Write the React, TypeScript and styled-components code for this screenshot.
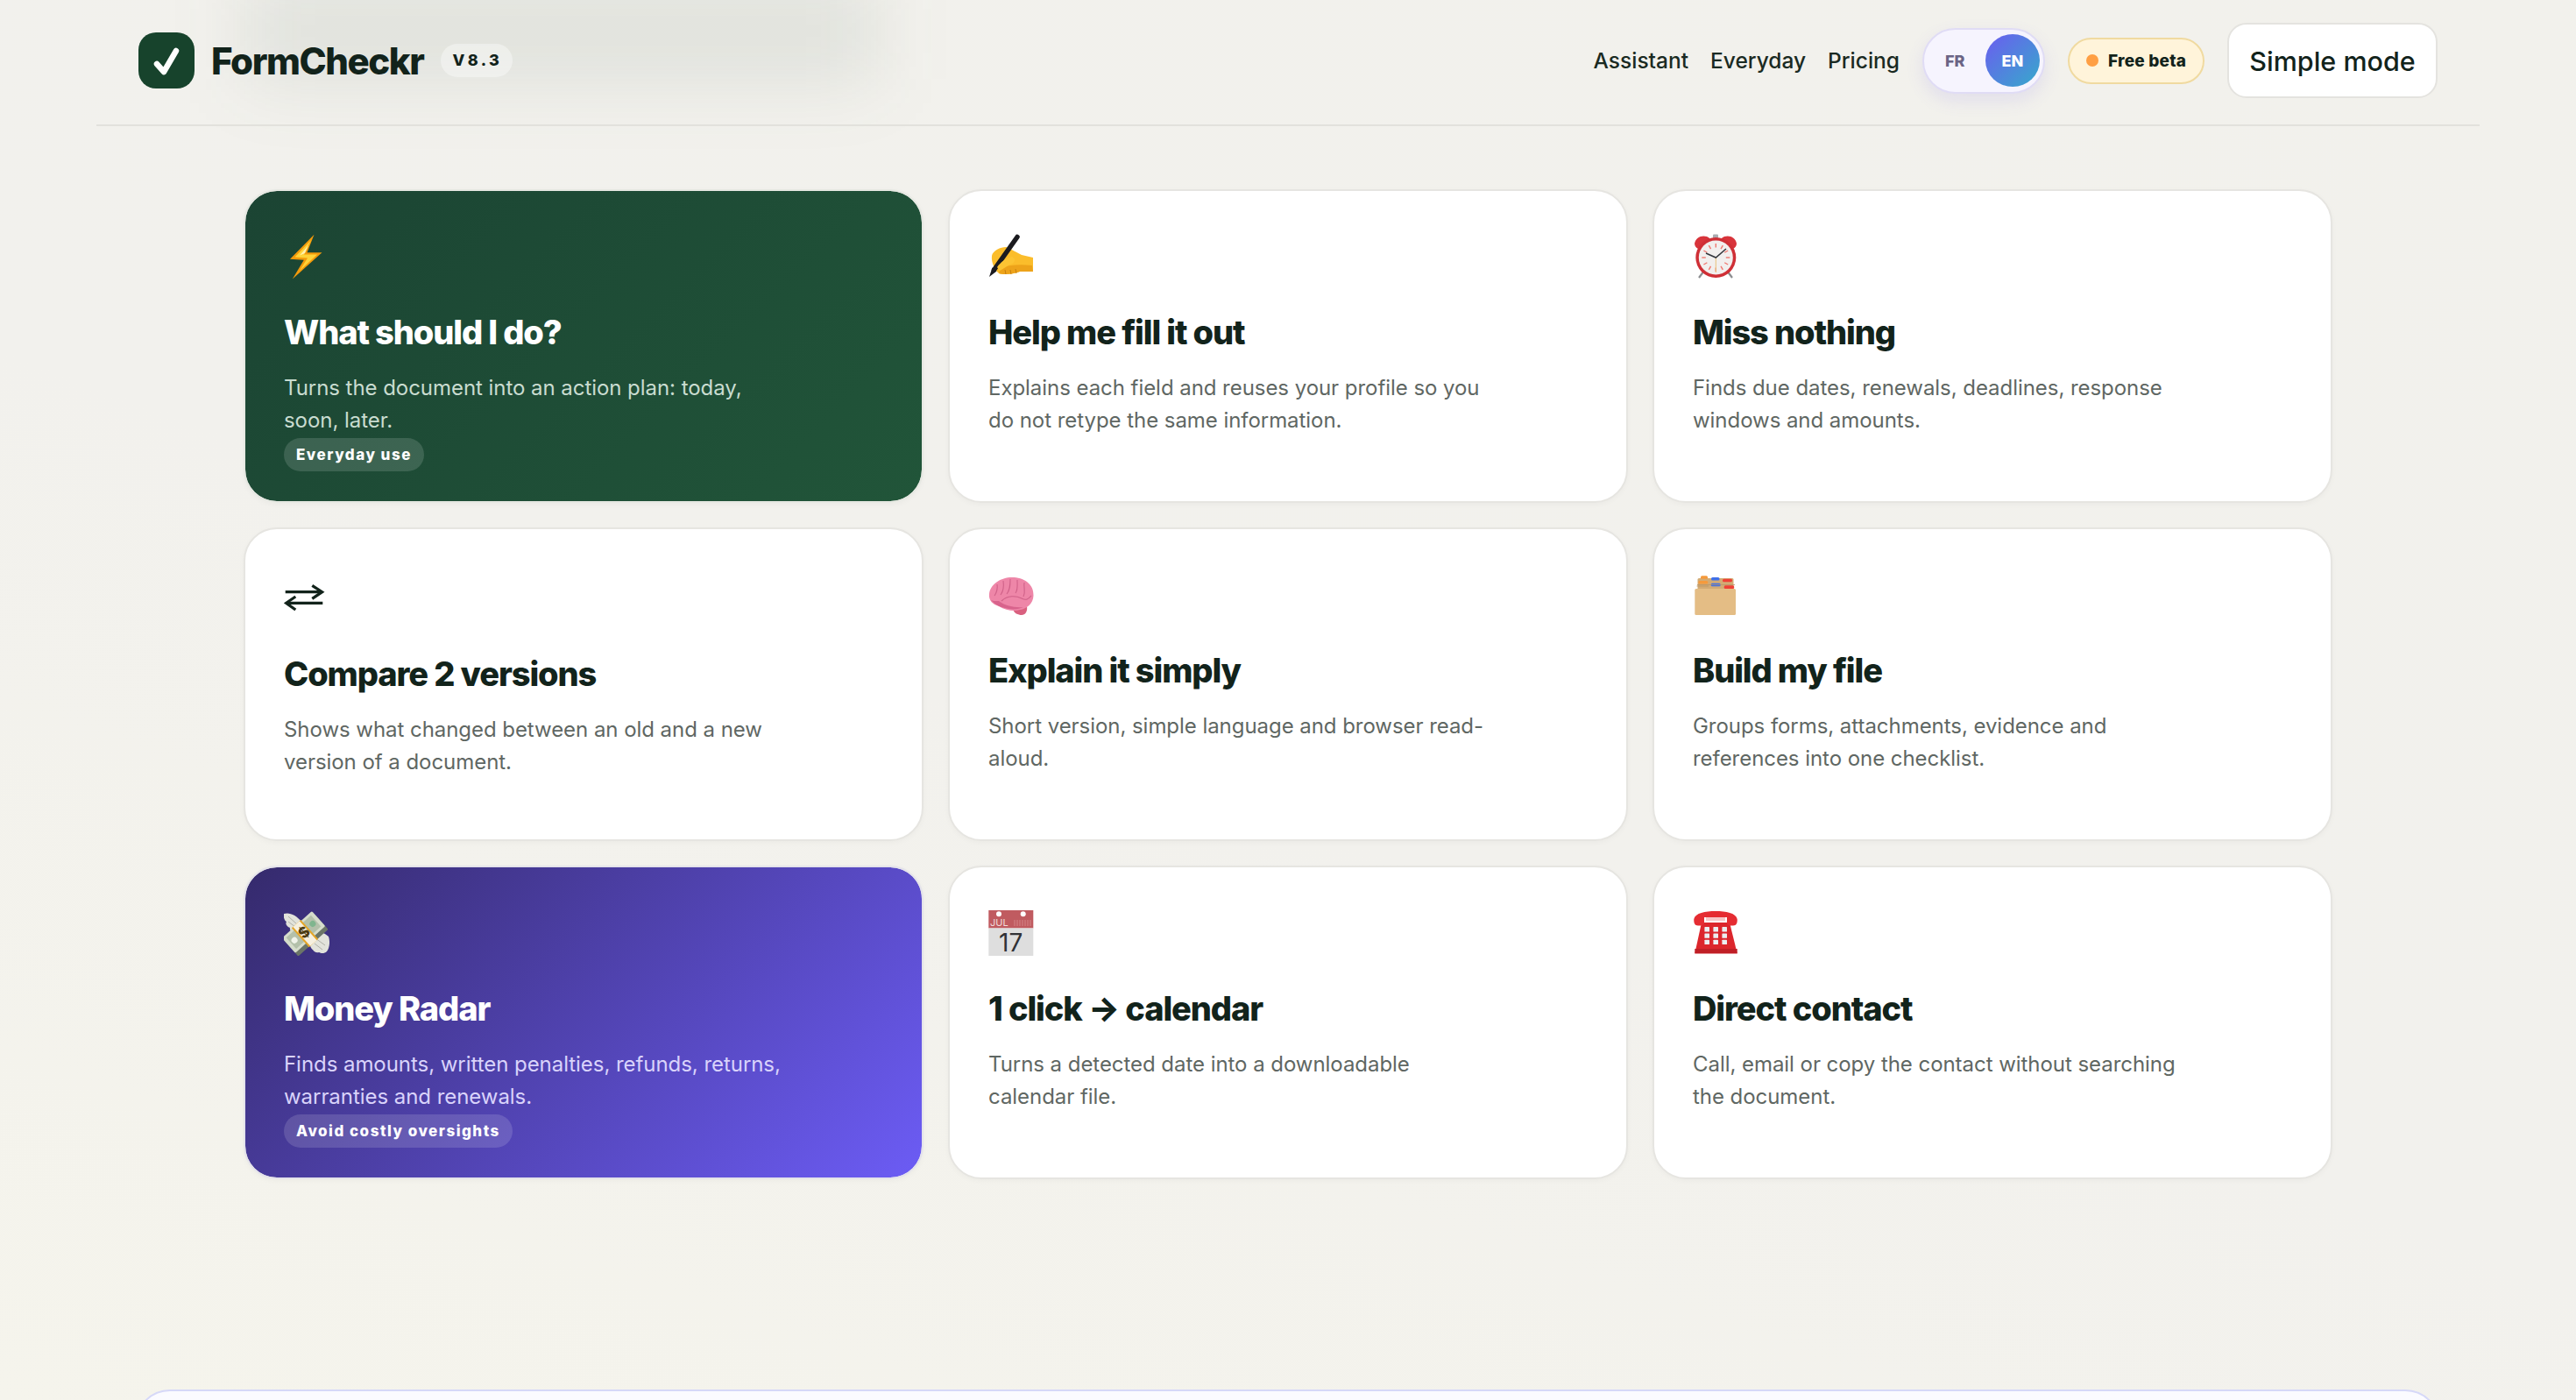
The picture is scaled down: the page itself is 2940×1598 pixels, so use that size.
import React from 'react'
import styled, { createGlobalStyle } from 'styled-components'

const Global = createGlobalStyle`
  html, body {
    margin: 0;
    height: 100%;
    overflow: hidden;
    background: linear-gradient(200deg, #f2f1ec 0%, #f2f1ed 55%, #f5f4ec 100%);
  }
  body {
    font-family: Inter, "Liberation Sans", sans-serif;
    color: #12231b;
  }
`

const Page = styled.div`
  position: relative;
  height: 1598px;
  overflow: hidden;
`
const Smudge = styled.div`
  position: absolute;
  left: 280px;
  top: -20px;
  width: 720px;
  height: 110px;
  background: rgba(60, 85, 70, 0.1);
  filter: blur(42px);
  pointer-events: none;
`
const Header = styled.header`
  position: relative;
  display: flex;
  align-items: center;
  justify-content: space-between;
  margin: 0 110px;
  padding: 26px 48px 30px;
  border-bottom: 2px solid #e2e1dc;
`
const Brand = styled.div`
  display: flex;
  align-items: center;
`
const LogoMark = styled.div`
  display: flex;
  align-items: center;
  justify-content: center;
  width: 64px;
  height: 64px;
  border-radius: 20px;
  background: #17432c;
`
const BrandName = styled.span`
  margin-left: 19px;
  font-size: 42px;
  font-weight: 800;
  letter-spacing: -1.45px;
  color: #12231b;
`
const Version = styled.span`
  margin-left: 20px;
  padding: 0 12px 0 13px;
  height: 38px;
  line-height: 38px;
  border-radius: 19px;
  background: rgba(255, 255, 255, 0.38);
  font-size: 18px;
  font-weight: 800;
  letter-spacing: 3.4px;
  color: #12231b;
`
const Actions = styled.div`
  display: flex;
  align-items: center;
`
const Nav = styled.nav`
  display: flex;
  gap: 25px;
  margin-right: 26px;
`
const NavLink = styled.a`
  font-size: 24.5px;
  font-weight: 450;
  color: #1a2a22;
`
const LangToggle = styled.div`
  display: flex;
  align-items: center;
  justify-content: space-between;
  box-sizing: border-box;
  width: 140px;
  height: 75px;
  padding: 0 4px 0 24px;
  border: 2px solid #e0dcf5;
  border-radius: 38px;
  background: #f6f4fe;
  box-shadow: 0 8px 20px rgba(108, 92, 231, 0.12);
`
const LangOff = styled.span`
  font-size: 18px;
  font-weight: 800;
  color: #6b6485;
`
const LangOn = styled.span`
  display: flex;
  align-items: center;
  justify-content: center;
  width: 62px;
  height: 60px;
  border-radius: 50%;
  background: linear-gradient(135deg, #6c5cf0, #36aacb);
  font-size: 18px;
  font-weight: 800;
  color: #fff;
`
const BetaPill = styled.div`
  display: flex;
  align-items: center;
  gap: 11px;
  box-sizing: border-box;
  height: 53px;
  width: 156px;
  margin-left: 26px;
  padding-left: 19px;
  border: 2px solid #f0daa0;
  border-radius: 27px;
  background: #fff4da;
  font-size: 19px;
  font-weight: 800;
  letter-spacing: 0.2px;
  color: #12231b;
`
const BetaDot = styled.span`
  width: 14px;
  height: 14px;
  border-radius: 50%;
  background: #ff9f43;
`
const ModeButton = styled.button`
  box-sizing: border-box;
  width: 240px;
  height: 86px;
  margin-left: 26px;
  border: 2px solid #e4e3df;
  border-radius: 22px;
  background: #fff;
  font-family: inherit;
  font-size: 30.5px;
  font-weight: 450;
  color: #12231b;
`
const Grid = styled.main`
  position: relative;
  display: grid;
  grid-template-columns: repeat(3, 1fr);
  grid-auto-rows: 358px;
  gap: 28px;
  margin: 72px 278px 0;
`
const tones = {
  plain: 'background: #fff; border-color: #e6e5e1;',
  green: 'background: linear-gradient(135deg, #1b4433, #215539) padding-box; border-color: #e6e8e2;',
  violet: 'background: linear-gradient(135deg, #352a6c, #6c5cf5) padding-box; border-color: #e4e3ea;'
}
const descColors = { plain: '#5f6763', green: '#c9dcd0', violet: '#d9d3fb' }
type Tone = keyof typeof tones

const Card = styled.article<{ $tone: Tone }>`
  box-sizing: border-box;
  padding: 49px 44px 0;
  border: 2px solid;
  border-radius: 38px;
  box-shadow: 0 2px 6px rgba(30, 40, 30, 0.03);
  ${p => tones[p.$tone]}
`
const IconBox = styled.div<{ $tall?: boolean }>`
  height: ${p => (p.$tall ? 56 : 52)}px;
  margin-bottom: 37px;
  svg {
    display: block;
  }
`
const Title = styled.h3<{ $light: boolean }>`
  margin: 0 0 22px;
  font-size: 38px;
  line-height: 46px;
  font-weight: 800;
  letter-spacing: -1.1px;
  color: ${p => (p.$light ? '#fff' : '#12231b')};
`
const Desc = styled.p<{ $tone: Tone }>`
  margin: 0 0 2px;
  max-width: 580px;
  font-size: 24px;
  line-height: 37px;
  letter-spacing: -0.05px;
  color: ${p => descColors[p.$tone]};
`
const Tag = styled.span`
  display: inline-block;
  height: 38px;
  padding: 0 14px;
  line-height: 38px;
  border-radius: 19px;
  background: rgba(255, 255, 255, 0.14);
  font-size: 17px;
  font-weight: 800;
  letter-spacing: 1.5px;
  color: #fff;
  vertical-align: top;
`
const BottomPanel = styled.section`
  position: relative;
  height: 320px;
  margin: 240px 155px 0 154px;
  border: 2px solid #d6d8f8;
  border-radius: 40px;
  background: #fbfbff;
`

const Check = () => (
  <svg width="36" height="36" viewBox="0 0 36 36" fill="none">
    <path d="M7 22 L15 31 L29 7" stroke="#fff" strokeWidth="6.5" strokeLinecap="round" strokeLinejoin="round" />
  </svg>
)

const Bolt = () => (
  <svg width="52" height="52" viewBox="0 0 52 52">
    <polygon points="34.5,0.7 7,28.8 22.8,29.8 9.8,51.5 43.5,21.3 26.5,21.3" fill="#f39a0b" />
    <polygon points="31,7 12.5,26.5 27,27.5 18,42 38,23.6 23,23.6" fill="#ffd338" />
    <polygon points="28,13 18,24.5 24,22 " fill="#fff2b0" />
  </svg>
)

const WritingHand = () => (
  <svg width="52" height="52" viewBox="0 0 52 52">
    <path d="M4 25 C5 19 14 15 20 15 C24 16 30 20 38 24 L51 27 L51 43 L36 43 C28 46 18 47 12 45 C8 42 3 33 4 25 Z" fill="#fbbd2b" />
    <path d="M14 38 C22 36 34 34 50 36 L51 43 L36 43 C28 46 18 47 12 45 Z" fill="#eda31a" />
    <path d="M19 41 L20 46 M25 41 L26 46 M31 40 L32 45" stroke="#c77f10" strokeWidth="1" />
    <path d="M33 3.5 L6.5 41" stroke="#1b1b1f" strokeWidth="5.5" strokeLinecap="round" />
    <polygon points="4.5,38.5 9.5,42.5 1,49" fill="#1b1b1f" />
    <path d="M10 38 C14 32 20 28 27 26 C31 28 31 32 27 34 C22 36 17 40 13 42 Z" fill="#fcc433" />
  </svg>
)

const AlarmClock = () => {
  const ticks = Array.from({ length: 12 }, (_, i) => i * 30)
  return (
    <svg width="52" height="52" viewBox="0 0 52 52">
      <path d="M13 42 L7 50 M39 42 L45 50" stroke="#8b8d90" strokeWidth="2.2" />
      <rect x="23" y="0.5" width="6" height="5" rx="1" fill="#a9abb0" />
      <path d="M2 11 C3 4 10 1 16 3 C19 4 20 6 20 7 L6 17 C4 16 2 14 2 11 Z" fill="#d8343b" />
      <path d="M50 11 C49 4 42 1 36 3 C33 4 32 6 32 7 L46 17 C48 16 50 14 50 11 Z" fill="#d8343b" />
      <circle cx="26.3" cy="27" r="23" fill="#cf2f36" />
      <circle cx="26.3" cy="27" r="19.5" fill="#f2efee" />
      {ticks.map(a => (
        <line key={a} x1="26.3" y1="11" x2="26.3" y2="15.5" stroke="#f0776f" strokeWidth="1.4" transform={`rotate(${a} 26.3 27)`} />
      ))}
      <path d="M26.3 27 L26.3 44" stroke="#e8c27a" strokeWidth="1" />
      <path d="M15 22 L26.3 27 L38 17" stroke="#33363c" strokeWidth="1.5" fill="none" />
    </svg>
  )
}

const Arrows = () => (
  <svg width="52" height="56" viewBox="0 0 52 56" fill="none" stroke="#12231b" strokeWidth="3.2">
    <path d="M1.7 22.7 H43" />
    <path d="M32.3 15.3 L43.6 22.7 L32.3 30.3" />
    <path d="M44.3 35.3 H3" />
    <path d="M13.3 28 L2.6 35.3 L13.3 43" />
  </svg>
)

const Brain = () => (
  <svg width="52" height="52" viewBox="0 0 52 52">
    <path d="M28 42 C29 47 34 49 38 49 C42 49 45 45 44 39 Z" fill="#d9607f" />
    <path d="M1 25 C2 14 14 6 27 6 C40 6 52 13 51.5 27 C51 36 44 42 36 43 C30 45 20 44 12 39 C5 37 0 32 1 25 Z" fill="#ee86a8" />
    <path d="M3 32 C8 38 16 41 24 42 C30 43 36 42 40 40 C30 41 18 38 12 33 C8 33 5 33 3 32 Z" fill="#d8638c" />
    <path d="M10 14 C11 20 9 24 7 27 M17 10 C18 17 17 22 14 26 M25 8 C25 14 25 20 21 25 M33 9 C33 15 34 20 31 24 M41 12 C40 18 43 22 40 28 M15 33 C22 26 32 27 38 30 C44 33 46 30 49 27" stroke="#cf6188" strokeWidth="1.1" fill="none" />
  </svg>
)

const FileBox = () => (
  <svg width="52" height="52" viewBox="0 0 52 52">
    <rect x="5.5" y="7" width="41" height="14" rx="1.5" fill="#d3ab74" />
    <rect x="9" y="4.3" width="8" height="3.5" rx="1.5" fill="#f59a3c" />
    <rect x="21" y="6" width="9.5" height="3.5" rx="1.5" fill="#3f6fe8" />
    <rect x="34" y="7.7" width="11" height="3.5" rx="1.5" fill="#ef4136" />
    <rect x="6.3" y="10" width="11" height="3.5" rx="1.5" fill="#f59a3c" />
    <rect x="20.7" y="12.7" width="11" height="3.5" rx="1.5" fill="#3f6fe8" />
    <rect x="35.7" y="15.3" width="11.5" height="3.6" rx="1.5" fill="#ef4136" />
    <path d="M4.5 16 H18 M5 14.5 H48" stroke="#b99464" strokeWidth="0.8" />
    <rect x="2.3" y="19" width="46.7" height="30" rx="1.5" fill="#e4bd85" />
  </svg>
)

const MoneyWings = () => (
  <svg width="52" height="52" viewBox="0 0 52 52">
    <path d="M21 14 C14 5 6 2 0 4 C-1 8 1 12 3 13 C1 16 4 19 7 20 C6 23 10 25 13 25 C15 27 19 25 21 22 Z" fill="#e2e3db" />
    <path d="M5 7 L15 16 M5 13 L13 19" stroke="#a9aaa0" strokeWidth="0.9" />
    <path d="M30 28 C36 22 46 25 51 30 C53 36 52 43 49 47 C46 50 42 49 40 48 C37 49 34 47 33 45 C30 43 28 36 30 28 Z" fill="#e2e3db" />
    <path d="M36 32 L47 40 M35 38 L44 45" stroke="#a9aaa0" strokeWidth="0.9" />
    <g transform="rotate(-42 23.5 26)">
      <rect x="0.5" y="18" width="46" height="23" rx="1.5" fill="#6b7567" />
      <rect x="0.5" y="13" width="46" height="23" rx="1.5" fill="#d5dccb" />
      <rect x="4.5" y="16" width="38" height="17" fill="#b3c0aa" />
      <circle cx="9.5" cy="24.5" r="3.5" fill="#f0f3ea" />
      <circle cx="37.5" cy="24.5" r="3.5" fill="#7fb58e" />
      <rect x="16.5" y="12" width="14" height="29.5" fill="#e5a526" />
      <rect x="18.5" y="12" width="10" height="29.5" fill="#f6f0df" />
      <text x="23.5" y="31" fontSize="17" fontWeight="800" fill="#4a3a10" textAnchor="middle" fontFamily="Inter, sans-serif">$</text>
    </g>
  </svg>
)

const Calendar = () => (
  <svg width="52" height="52" viewBox="0 0 52 52">
    <rect x="0.3" y="0" width="51" height="20.5" fill="#c05b60" />
    <rect x="0.3" y="20.5" width="51" height="31.5" fill="#dedede" />
    <circle cx="12" cy="4.3" r="3" fill="#fff" />
    <circle cx="39.7" cy="4.3" r="3" fill="#fff" />
    <path d="M30 11 V18 M33 11 V18 M36 11 V18 M39 11 V18 M42 11 V18 M45 11 V18 M48 11 V18" stroke="#dd9a9c" strokeWidth="0.7" />
    <text x="2" y="18" fontSize="11" fill="#f1dcdc" fontFamily="Inter, sans-serif">JUL</text>
    <text x="25.7" y="46.5" fontSize="28" fill="#303236" textAnchor="middle" fontFamily="Inter, sans-serif">17</text>
  </svg>
)

const Telephone = () => {
  const keys = [16, 26, 36]
  const rows = [21.7, 29, 36.3]
  return (
    <svg width="52" height="52" viewBox="0 0 52 52">
      <path d="M10 14 H42 L50.7 49.3 H2.3 Z" fill="#dc262c" />
      <rect x="2.3" y="44" width="48.4" height="5.3" fill="#c01f26" />
      <path d="M1.3 10 C3 3 14 1 26 1 C38 1 49 3 50.7 10 C51 14 50 17.5 46 17.5 C42 17.5 39 17 39 14 L39 8 H13 L13 14 C13 17 10 17.5 6 17.5 C2 17.5 1 14 1.3 10 Z" fill="#e52c32" />
      <rect x="15" y="8" width="22" height="4" fill="#f6c7c7" />
      {rows.map(y => keys.map(x => <rect key={`${x}-${y}`} x={x - 2.6} y={y - 2.6} width="5.6" height="5.4" rx="0.6" fill="#eceef0" />))}
    </svg>
  )
}

const cards: { tone: Tone; icon: React.ReactNode; tall?: boolean; title: string; desc: string; tag?: string }[] = [
  { tone: 'green', icon: <Bolt />, title: 'What should I do?', desc: 'Turns the document into an action plan: today, soon, later.', tag: 'Everyday use' },
  { tone: 'plain', icon: <WritingHand />, title: 'Help me fill it out', desc: 'Explains each field and reuses your profile so you do not retype the same information.' },
  { tone: 'plain', icon: <AlarmClock />, title: 'Miss nothing', desc: 'Finds due dates, renewals, deadlines, response windows and amounts.' },
  { tone: 'plain', icon: <Arrows />, tall: true, title: 'Compare 2 versions', desc: 'Shows what changed between an old and a new version of a document.' },
  { tone: 'plain', icon: <Brain />, title: 'Explain it simply', desc: 'Short version, simple language and browser read-aloud.' },
  { tone: 'plain', icon: <FileBox />, title: 'Build my file', desc: 'Groups forms, attachments, evidence and references into one checklist.' },
  { tone: 'violet', icon: <MoneyWings />, title: 'Money Radar', desc: 'Finds amounts, written penalties, refunds, returns, warranties and renewals.', tag: 'Avoid costly oversights' },
  { tone: 'plain', icon: <Calendar />, title: '1 click → calendar', desc: 'Turns a detected date into a downloadable calendar file.' },
  { tone: 'plain', icon: <Telephone />, title: 'Direct contact', desc: 'Call, email or copy the contact without searching the document.' }
]

const App = () => {
  return (
    <Page>
      <Global />
      <Smudge />
      <Header>
        <Brand>
          <LogoMark>
            <Check />
          </LogoMark>
          <BrandName>FormCheckr</BrandName>
          <Version>V8.3</Version>
        </Brand>
        <Actions>
          <Nav>
            <NavLink>Assistant</NavLink>
            <NavLink>Everyday</NavLink>
            <NavLink>Pricing</NavLink>
          </Nav>
          <LangToggle>
            <LangOff>FR</LangOff>
            <LangOn>EN</LangOn>
          </LangToggle>
          <BetaPill>
            <BetaDot />
            Free beta
          </BetaPill>
          <ModeButton>Simple mode</ModeButton>
        </Actions>
      </Header>
      <Grid>
        {cards.map(c => (
          <Card key={c.title} $tone={c.tone}>
            <IconBox $tall={c.tall}>{c.icon}</IconBox>
            <Title $light={c.tone !== 'plain'}>{c.title}</Title>
            <Desc $tone={c.tone}>{c.desc}</Desc>
            {c.tag && <Tag>{c.tag}</Tag>}
          </Card>
        ))}
      </Grid>
      <BottomPanel />
    </Page>
  )
}

export default App
